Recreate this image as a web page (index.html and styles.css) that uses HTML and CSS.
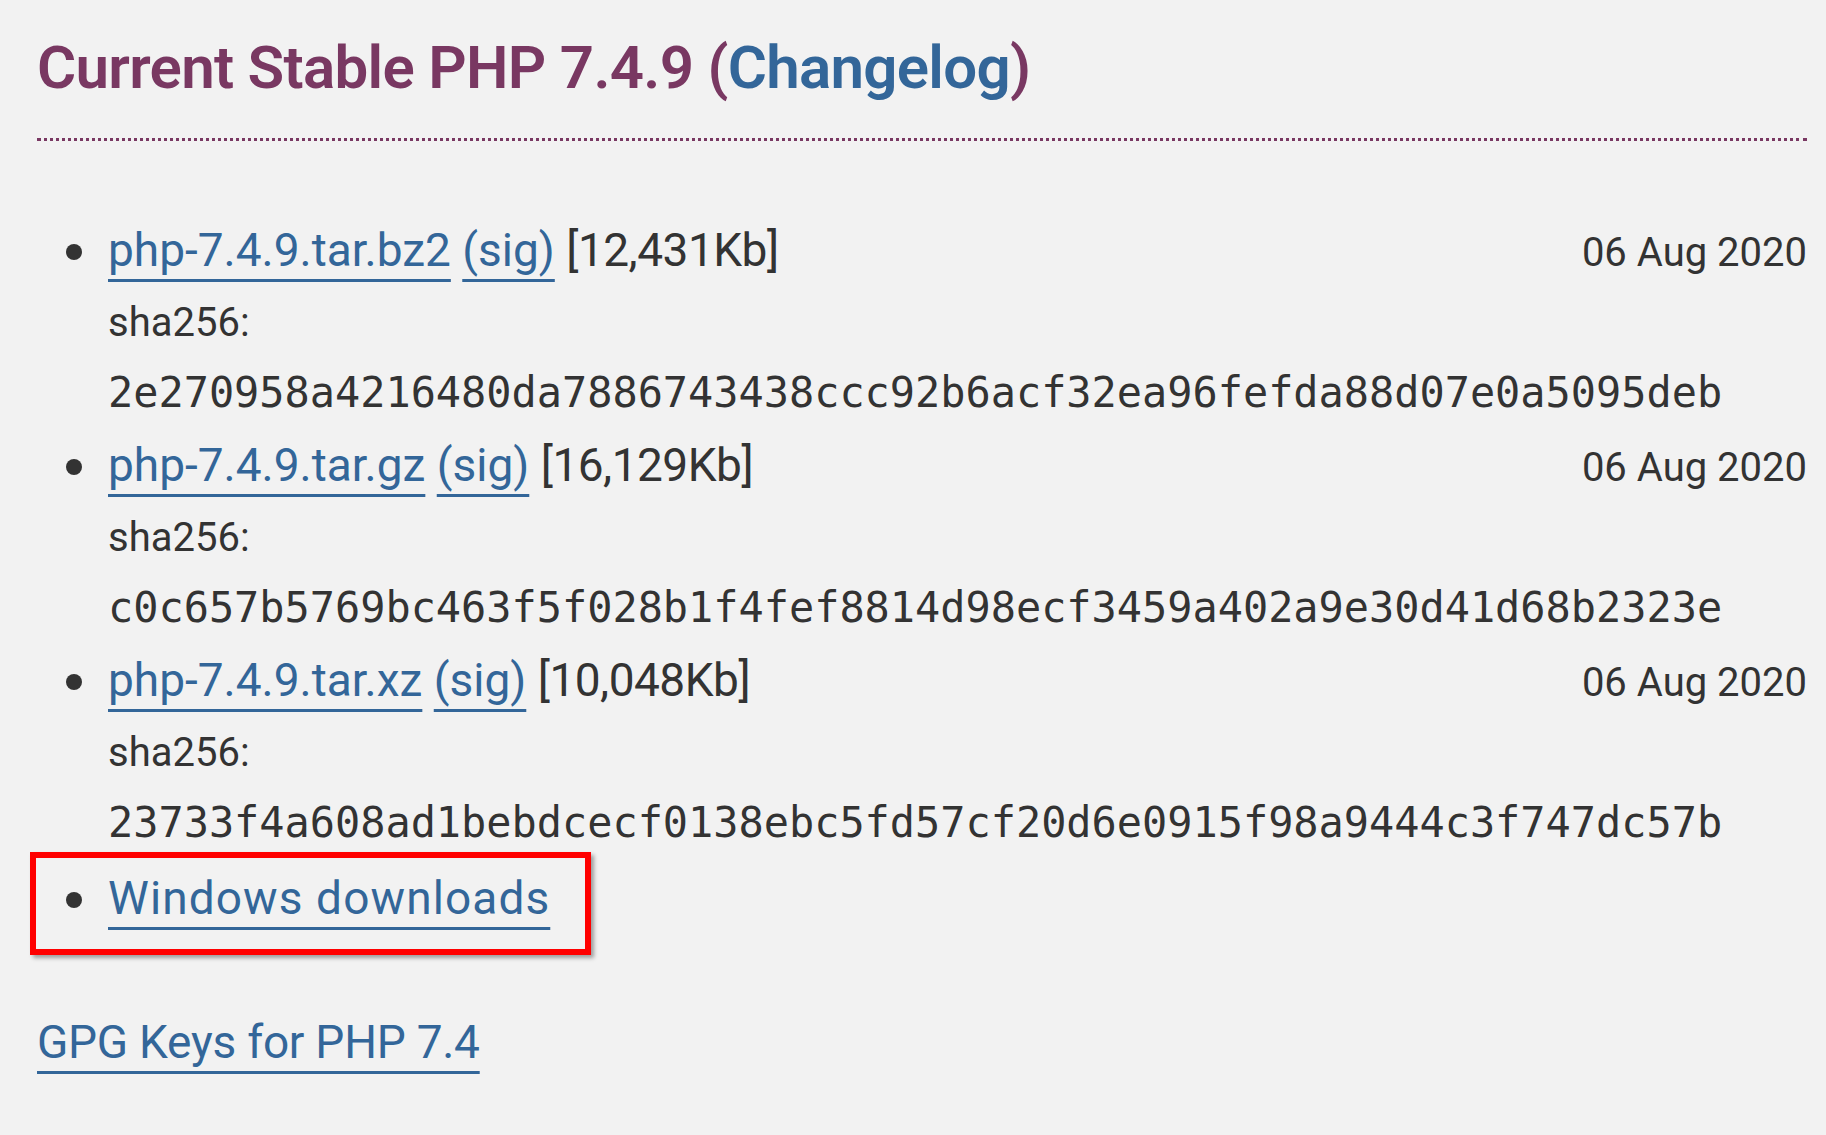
FILE: index.html
```html
<!DOCTYPE html>
<html lang="en">
<head>
    <meta charset="UTF-8">
    <meta name="viewport" content="width=device-width, initial-scale=1.0">
    <title>PHP: Downloads</title>
    <link rel="stylesheet" href="styles.css">
</head>
<body>
    <div class="content-box">
        <h3 class="title">
            <span class="release-state">Current Stable</span>
            PHP 7.4.9 (<a href="#changelog" class="changelog">Changelog</a>)
        </h3>

        <ul class="downloads">
            <li>
                <div class="dl-head">
                    <span>
                        <a href="#bz2" class="download-link">php-7.4.9.tar.bz2</a>
                        <a href="#bz2-sig" class="sig">(sig)</a>
                        <span class="dlsize">[12,431Kb]</span>
                    </span>
                    <span class="releasedate">06 Aug 2020</span>
                </div>
                <div class="sum-label">sha256:</div>
                <div class="sum-hash">2e270958a4216480da7886743438ccc92b6acf32ea96fefda88d07e0a5095deb</div>
            </li>
            <li>
                <div class="dl-head">
                    <span>
                        <a href="#gz" class="download-link">php-7.4.9.tar.gz</a>
                        <a href="#gz-sig" class="sig">(sig)</a>
                        <span class="dlsize">[16,129Kb]</span>
                    </span>
                    <span class="releasedate">06 Aug 2020</span>
                </div>
                <div class="sum-label">sha256:</div>
                <div class="sum-hash">c0c657b5769bc463f5f028b1f4fef8814d98ecf3459a402a9e30d41d68b2323e</div>
            </li>
            <li>
                <div class="dl-head">
                    <span>
                        <a href="#xz" class="download-link">php-7.4.9.tar.xz</a>
                        <a href="#xz-sig" class="sig">(sig)</a>
                        <span class="dlsize">[10,048Kb]</span>
                    </span>
                    <span class="releasedate">06 Aug 2020</span>
                </div>
                <div class="sum-label">sha256:</div>
                <div class="sum-hash">23733f4a608ad1bebdcecf0138ebc5fd57cf20d6e0915f98a9444c3f747dc57b</div>
            </li>
            <li class="windows">
                <span class="highlight"></span>
                <div class="dl-head">
                    <a href="#windows" class="windows-link">Windows downloads</a>
                </div>
            </li>
        </ul>

        <a href="#gpg-7.4" class="gpg-link">GPG Keys for PHP 7.4</a>
    </div>
</body>
</html>
```
FILE: styles.css
```css
body {
    margin: 0;
    background-color: #f2f2f2;
    color: #333;
    font-family: Roboto, "Noto Sans", Arial, sans-serif;
    font-size: 46px;
}
a {
    color: #369;
    text-decoration: underline;
    text-decoration-thickness: 3px;
    text-underline-offset: 13px;
    text-decoration-skip-ink: none;
}
.content-box {
    padding: 0 19px 0 37px;
}
.title {
    margin: 0;
    padding: 32px 0 34px;
    font-size: 60px;
    font-weight: 600;
    line-height: 72px;
    letter-spacing: -0.7px;
    color: #793862;
    border-bottom: 3px dotted #793862;
}
.title .changelog {
    text-decoration: none;
}
.downloads {
    margin: 72px 0 0;
    padding-left: 71px;
    list-style: none;
}
.downloads li {
    position: relative;
}
/* bullet is larger than the default disc */
.downloads li::before {
    content: "";
    position: absolute;
    left: -42px;
    top: 31px;
    width: 16px;
    height: 16px;
    border-radius: 50%;
    background-color: #333;
}
.dl-head {
    display: flex;
    justify-content: space-between;
    align-items: baseline;
    line-height: 74px;
}
.dlsize {
    letter-spacing: -0.5px;
}
.releasedate {
    font-size: 40px;
    line-height: 70px;
}
.sum-label {
    font-size: 40px;
    line-height: 70px;
}
.sum-hash {
    font-family: "DejaVu Sans Mono", "Liberation Mono", monospace;
    font-size: 41.9px;
    line-height: 70px;
}
.downloads .windows {
    padding-top: 3px;
}
.downloads .windows::before {
    top: 34px;
}
.windows-link {
    letter-spacing: 1.1px;
}
.highlight {
    position: absolute;
    top: -6px;
    left: -78px;
    width: 561px;
    height: 103px;
    box-sizing: border-box;
    border: 6px solid #ff0000;
    box-shadow: 3px 3px 4px rgba(0, 0, 0, 0.35);
}
.gpg-link {
    display: inline-block;
    margin-top: 70px;
    line-height: 74px;
    letter-spacing: -0.25px;
}
```
